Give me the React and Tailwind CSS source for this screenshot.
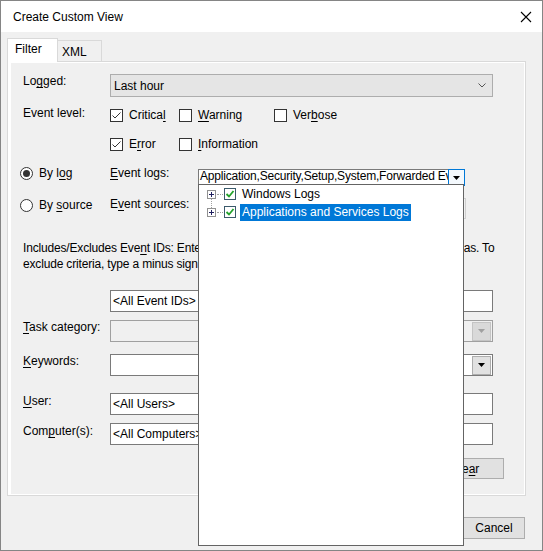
import React from "react";

function CheckBox({ checked }) {
  return (
    <div className="w-[13px] h-[13px] border border-[#333333] bg-white shrink-0 flex items-center justify-center">
      {checked && (
        <svg width="11" height="11" viewBox="0 0 11 11">
          <path d="M1.5 5.5 L4 8 L9.5 2.5" fill="none" stroke="#333333" strokeWidth="1" />
        </svg>
      )}
    </div>
  );
}

function Radio({ checked }) {
  return (
    <div className="w-[13px] h-[13px] rounded-full border border-[#333333] bg-white shrink-0 flex items-center justify-center">
      {checked && <div className="w-[7px] h-[7px] rounded-full bg-[#333333]" />}
    </div>
  );
}

function Check({ checked, children, w }) {
  return (
    <div className={`flex items-center gap-[6px] h-[13px] ${w}`}>
      <CheckBox checked={checked} />
      <span className="leading-[13px]">{children}</span>
    </div>
  );
}

function Tri({ color = "#000000" }) {
  return (
    <svg width="7" height="4" viewBox="0 0 7 4">
      <polygon points="0,0 7,0 3.5,4" fill={color} />
    </svg>
  );
}

function TextBox({ value }) {
  return (
    <div className="w-[383px] h-[22px] border border-[#7a7a7a] bg-white flex items-center pl-[2px] leading-[14px] whitespace-nowrap overflow-hidden">
      {value}
    </div>
  );
}

function Label({ children, pt = "pt-[1px]" }) {
  return <div className={`w-[87px] shrink-0 leading-[14px] ${pt}`}>{children}</div>;
}

function PlusBox() {
  return (
    <div className="w-[9px] h-[9px] border border-[#919191] bg-white flex items-center justify-center shrink-0">
      <svg width="7" height="7" viewBox="0 0 7 7">
        <path d="M1 3.5 H6 M3.5 1 V6" stroke="#1f1f5f" strokeWidth="1" />
      </svg>
    </div>
  );
}

function GreenCheck() {
  return (
    <div className="w-[12px] h-[12px] border border-[#3b5a6b] bg-white flex items-center justify-center shrink-0">
      <svg width="10" height="10" viewBox="0 0 10 10">
        <path d="M1.5 5 L4 7.5 L8.5 2" fill="none" stroke="#22a22a" strokeWidth="1.8" />
      </svg>
    </div>
  );
}

export default function App() {
  return (
    <div className="w-[543px] h-[551px] border border-[#858585] bg-[#f0f0f0] relative flex flex-col text-[12px] text-black font-['Liberation_Sans',Arial,sans-serif] overflow-hidden">
      {/* Title bar */}
      <div className="h-[31px] bg-white flex items-center justify-between pl-[12px] pr-[10px] shrink-0">
        <span className="leading-[14px]">Create Custom View</span>
        <svg width="12" height="12" viewBox="0 0 12 12">
          <path d="M1 1 L11 11 M11 1 L1 11" stroke="#000" strokeWidth="1.1" />
        </svg>
      </div>

      {/* Tabs */}
      <div className="flex items-end ml-[6px] mt-[6px] h-[23px] relative z-10">
        <div className="w-[51px] h-[24px] bg-white border border-b-0 border-[#d9d9d9] flex items-start pl-[7px] pt-[3px] leading-[14px] -mb-[1px]">
          Filter
        </div>
        <div className="w-[44px] h-[21px] bg-[#f0f0f0] border border-l-0 border-b-0 border-[#d9d9d9] flex items-start pl-[4px] pt-[4px] leading-[14px]">
          XML
        </div>
      </div>

      {/* Panel */}
      <div className="ml-[6px] w-[519px] h-[435px] border border-[#d9d9d9] bg-white pl-[3px] pr-[1px] pt-[1px] pb-[1px] shrink-0">
        <div className="w-full h-full bg-[#f0f0f0] flex flex-col pl-[12px] pt-[11px]">
          {/* Logged */}
          <div className="flex items-start h-[23px]">
            <Label pt="pt-0">
              Lo<u className="underline-offset-2">g</u>ged:
            </Label>
            <div className="w-[383px] h-[23px] bg-[#e5e5e5] border border-[#adadad] flex items-center justify-between pl-[3px] pr-[6px]">
              <span className="leading-[14px]">Last hour</span>
              <svg width="8" height="5" viewBox="0 0 8 5">
                <path d="M0.5 0.5 L4 4 L7.5 0.5" fill="none" stroke="#555" strokeWidth="1" />
              </svg>
            </div>
          </div>

          {/* Event level */}
          <div className="flex items-start mt-[9px]">
            <Label pt="pt-0">Event level:</Label>
            <div className="flex pt-[3px]">
              <Check checked w="w-[69px]">
                Critica<u className="underline-offset-2">l</u>
              </Check>
              <Check w="w-[95px]">
                <u className="underline-offset-2">W</u>arning
              </Check>
              <Check>
                Ver<u className="underline-offset-2">b</u>ose
              </Check>
            </div>
          </div>
          <div className="flex mt-[16px] ml-[87px]">
            <Check checked w="w-[69px]">
              E<u className="underline-offset-2">r</u>ror
            </Check>
            <Check>
              <u className="underline-offset-2">I</u>nformation
            </Check>
          </div>

          {/* By log */}
          <div className="flex items-start mt-[15px] -ml-[3px] h-[19px]">
            <div className="w-[90px] flex items-center gap-[6px] shrink-0">
              <Radio checked />
              <span className="leading-[14px]">
                By l<u className="underline-offset-2">o</u>g
              </span>
            </div>
            <div className="w-[88px] leading-[14px] shrink-0">
              <u className="underline-offset-2">E</u>vent logs:
            </div>
            <div className="w-[267px] h-[17px] mt-[3px] bg-white border border-[#7a7a7a] border-b-0 flex items-stretch">
              <div className="flex-1 overflow-hidden whitespace-nowrap pl-[1px] leading-[13px] tracking-[-0.2px]">
                Application,Security,Setup,System,Forwarded Events
              </div>
              <div className="w-[17px] border border-[#0078d7] bg-[#f4f9fd] flex items-center justify-center -mt-[1px] -mr-[1px]">
                <Tri />
              </div>
            </div>
          </div>

          {/* By source */}
          <div className="flex items-start mt-[13px] -ml-[3px] h-[21px]">
            <div className="w-[90px] flex items-center gap-[6px] shrink-0 mt-[1px]">
              <Radio />
              <span className="leading-[13px]">
                By <u className="underline-offset-2">s</u>ource
              </span>
            </div>
            <div className="w-[88px] leading-[13px] shrink-0">
              E<u className="underline-offset-2">v</u>ent sources:
            </div>
            <div className="w-[268px] h-[21px] bg-[#f0f0f0] border border-[#cfcfcf]" />
          </div>

          {/* Includes text */}
          <div className="mt-[21px] leading-[16px] whitespace-nowrap w-[470px] tracking-[-0.17px]">
            Includes/Excludes Eve<u className="underline-offset-2">n</u>t IDs: Enter ID numbers and/or ID ranges separated by commas. To
            <br />
            exclude criteria, type a minus sign first. For example 1,3,5-99,-76
          </div>

          {/* Event IDs */}
          <div className="flex mt-[18px] ml-[87px]">
            <TextBox value="<All Event IDs>" />
          </div>

          {/* Task category */}
          <div className="flex items-start mt-[8px]">
            <Label pt="pt-0">
              <u className="underline-offset-2">T</u>ask category:
            </Label>
            <div className="w-[383px] h-[22px] border border-[#a0a0a0] bg-[#f0f0f0] flex items-center justify-end pr-[1px]">
              <div className="w-[19px] h-[19px] bg-[#d9d9d9] border border-[#c4c4c4] flex items-center justify-center">
                <Tri color="#a0a0a0" />
              </div>
            </div>
          </div>

          {/* Keywords */}
          <div className="flex items-start mt-[12px]">
            <Label pt="pt-0">
              <u className="underline-offset-2">K</u>eywords:
            </Label>
            <div className="w-[383px] h-[22px] border border-[#7a7a7a] bg-white flex items-center justify-end pr-[1px]">
              <div className="w-[19px] h-[19px] bg-[#e1e1e1] border border-[#adadad] flex items-center justify-center">
                <Tri />
              </div>
            </div>
          </div>

          {/* User */}
          <div className="flex items-start mt-[17px]">
            <Label pt="pt-[1px]">
              <u className="underline-offset-2">U</u>ser:
            </Label>
            <TextBox value="<All Users>" />
          </div>

          {/* Computer */}
          <div className="flex items-start mt-[8px]">
            <Label pt="pt-[1px]">
              Com<u className="underline-offset-2">p</u>uter(s):
            </Label>
            <TextBox value="<All Computers>" />
          </div>

          {/* Clear */}
          <div className="flex justify-end mt-[13px] pr-[20px]">
            <div className="w-[78px] h-[21px] bg-[#e1e1e1] border border-[#adadad] flex items-center justify-center leading-[14px]">
              Cle<u className="underline-offset-2">a</u>r
            </div>
          </div>
        </div>
      </div>

      {/* Bottom buttons */}
      <div className="flex justify-end gap-[9px] mt-[21px] pr-[17px]">
        <div className="w-[62px] h-[22px] bg-[#e1e1e1] border border-[#adadad] flex items-center justify-center leading-[14px]">
          OK
        </div>
        <div className="w-[62px] h-[22px] bg-[#e1e1e1] border border-[#adadad] flex items-center justify-center leading-[14px]">
          Cancel
        </div>
      </div>

      {/* Dropdown popup */}
      <div className="absolute left-[197px] top-[183px] w-[266px] h-[362px] bg-white border border-[#646464] z-20">
        <div className="relative pl-[8px]">
          <div className="flex items-center h-[18px]">
            <PlusBox />
            <div className="w-[6px] border-t border-dotted border-[#a0a0a0] mx-[1px]" />
            <GreenCheck />
            <span className="ml-[6px] leading-[14px]">Windows Logs</span>
          </div>
          <div className="flex items-center h-[18px]">
            <PlusBox />
            <div className="w-[6px] border-t border-dotted border-[#a0a0a0] mx-[1px]" />
            <GreenCheck />
            <span className="ml-[4px] bg-[#0078d7] text-white leading-[17px] px-[2px]">
              Applications and Services Logs
            </span>
          </div>
          <div className="absolute left-[12px] top-[14px] h-[9px] border-l border-dotted border-[#a0a0a0]" />
        </div>
      </div>
    </div>
  );
}
